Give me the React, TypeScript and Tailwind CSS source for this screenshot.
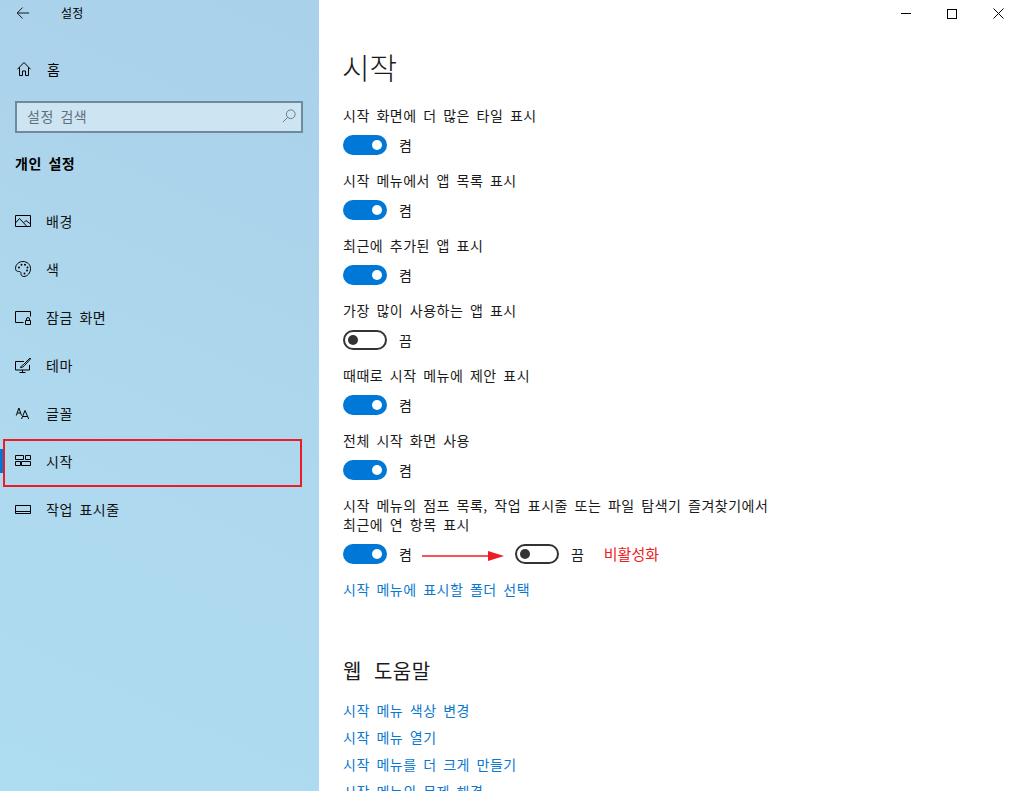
import type { ReactNode } from "react";

const font = { fontFamily: '"Noto Sans CJK KR", "Noto Sans", sans-serif' };

function Toggle({ on }: { on: boolean }) {
  return on ? (
    <div className="flex h-[20px] w-[44px] items-center justify-end rounded-full bg-[#0078d7] pr-[5px]">
      <div className="h-[10px] w-[10px] rounded-full bg-white" />
    </div>
  ) : (
    <div className="flex h-[20px] w-[44px] items-center rounded-full border-2 border-[#333333] bg-white pl-[3px]">
      <div className="h-[10px] w-[10px] rounded-full bg-[#333333]" />
    </div>
  );
}

function Setting({ label, on }: { label: string; on: boolean }) {
  return (
    <div className="h-[65px]">
      <div className="h-[20px] text-[14px] leading-[18px] tracking-[0.5px] text-[#1a1a1a]">{label}</div>
      <div className="mt-[9px] flex items-center gap-[12px]">
        <Toggle on={on} />
        <span className="text-[14px] leading-[20px] text-[#1a1a1a]">{on ? "켬" : "끔"}</span>
      </div>
    </div>
  );
}

const icon = "h-[16px] w-[16px] shrink-0 fill-none stroke-black stroke-1";

const navItems: { label: string; icon: ReactNode }[] = [
  {
    label: "배경",
    icon: (
      <svg viewBox="0 0 16 16" className={icon}>
        <path d="M.5 2.5h15v11H.5z" />
        <path d="M.5 10 4.5 5.5 12 13.5M9 9.5l2-2 4.5 3.5" />
      </svg>
    ),
  },
  {
    label: "색",
    icon: (
      <svg viewBox="0 0 16 16" className={icon}>
        <path d="M8 .5C3.8.5.5 3.6.5 7.5c0 2.2 1.6 3 3 3 1.6 0 2.5.3 2.5 2 0 1.8 1 3 2.8 3 3.6 0 6.7-3.5 6.7-8 0-4-3.400-7-7.500-7z" />
        <g className="fill-black stroke-none">
          <circle cx="4" cy="6.5" r="1" />
          <circle cx="6.5" cy="3.8" r="1" />
          <circle cx="10" cy="3.8" r="1" />
          <circle cx="12.5" cy="6.5" r="1" />
          <circle cx="12" cy="9.5" r="1" />
          <circle cx="9.5" cy="12.5" r="1" />
        </g>
      </svg>
    ),
  },
  {
    label: "잠금 화면",
    icon: (
      <svg viewBox="0 0 16 16" className={icon}>
        <path d="M8.5 13.5h-8v-11h15v5" />
        <path d="M10.5 11.5h5v4h-5zM11.5 11.5V10a1.5 1.5 0 0 1 3 0v1.5" />
      </svg>
    ),
  },
  {
    label: "테마",
    icon: (
      <svg viewBox="0 0 16 16" className={icon}>
        <path d="M9 4.5H.5V13h14V8M4.5 15.5h6M7.5 13v2.500" />
        <path d="M15 1 8.5 7.5l1 1L15.500 2zM8 8c-1 .3-1.800 1-2.500 2.500 1.500 0 2.800-.5 3.500-1.500" />
      </svg>
    ),
  },
  {
    label: "글꼴",
    icon: (
      <svg viewBox="0 0 16 16" className={icon}>
        <path d="m1.3 10.500 2.600-7.500 2.600 7.500M2.200 8h3.400M6.500 14 10 5.500l3.700 8.500M7.800 11.500h4.800" />
      </svg>
    ),
  },
  {
    label: "시작",
    icon: (
      <svg viewBox="0 0 16 16" className={icon}>
        <path d="M.5 2.5h8v4h-8zM10.5 2.5h5v4h-5zM.5 8.5h5v4h-5zM6.5 8.5h9v4h-9z" />
      </svg>
    ),
  },
  {
    label: "작업 표시줄",
    icon: (
      <svg viewBox="0 0 16 16" className={icon}>
        <path d="M.5 4.5h15v8H.5zM.5 10.5h15" />
      </svg>
    ),
  },
];

const settings = [
  { label: "시작 화면에 더 많은 타일 표시", on: true },
  { label: "시작 메뉴에서 앱 목록 표시", on: true },
  { label: "최근에 추가된 앱 표시", on: true },
  { label: "가장 많이 사용하는 앱 표시", on: false },
  { label: "때때로 시작 메뉴에 제안 표시", on: true },
  { label: "전체 시작 화면 사용", on: true },
];

const helpLinks = ["시작 메뉴 색상 변경", "시작 메뉴 열기", "시작 메뉴를 더 크게 만들기", "시작 메뉴의 문제 해결"];

function Sidebar() {
  return (
    <aside className="h-full w-[319px] shrink-0 bg-[linear-gradient(205deg,#a9d1ea_0%,#aed8ee_55%,#aedcf0_100%)] text-black">
      <div className="flex h-[26px] items-center">
        <svg viewBox="0 0 16 16" className="ml-[16px] h-[14px] w-[14px] fill-none stroke-[#111111] stroke-[1.1]">
          <path d="M15 8H1.5M7.5 1.8 1.3 8l6.2 6.2" />
        </svg>
        <span className="ml-[31px] text-[12px] tracking-[0.3px]">설정</span>
      </div>
      <div className="mt-[27px] flex h-[32px] items-center pl-[16px]">
        <svg viewBox="0 0 16 16" className={icon}>
          <path d="M1.5 8.2 8 1.5l6.5 6.7M3.5 6.5v8h3V10h3v4.500h3v-8" />
        </svg>
        <span className="ml-[15px] text-[14px] tracking-[0.5px]">홈</span>
      </div>
      <div className="mx-[15px] mt-[16px] flex h-[32px] w-[288px] items-center justify-between border-2 border-[#6e8a9d] bg-[#cde4f2] pr-[5px] pb-[2px] pl-[10px]">
        <span className="text-[14px] tracking-[0.5px] text-[#5f6f7a]">설정 검색</span>
        <svg viewBox="0 0 16 16" className="h-[14px] w-[14px] fill-none stroke-[#5f6f7a] stroke-1">
          <circle cx="10" cy="6" r="5" />
          <path d="M6.5 9.5 1 15" />
        </svg>
      </div>
      <div className="mt-[20px] pl-[15px] text-[14px] leading-[20px] font-bold tracking-[0.5px]">개인 설정</div>
      <nav className="relative mt-[24px]">
        {navItems.map((item) => (
          <div key={item.label} className="flex h-[48px] items-center pl-[15px]">
            {item.icon}
            <span className="ml-[15px] text-[14px] tracking-[0.5px] text-[#111111]">{item.label}</span>
          </div>
        ))}
        <div className="absolute top-[252px] left-0 h-[24px] w-[4px] bg-[#0078d7]" />
        <div className="absolute top-[242px] left-[3px] h-[48px] w-[299px] border-2 border-[#ed1c24]" />
      </nav>
    </aside>
  );
}

export default function App() {
  return (
    <div className="flex h-[791px] w-[1014px] overflow-hidden bg-white [word-spacing:3px]" style={font}>
      <Sidebar />
      <main className="relative flex-1 pl-[24px] text-[#1a1a1a]">
        <div className="absolute top-0 right-[-7px] flex h-[27px]">
          <div className="flex w-[46px] items-center justify-center">
            <div className="h-px w-[10px] bg-black" />
          </div>
          <div className="flex w-[46px] items-center justify-center">
            <div className="h-[10px] w-[10px] border border-black" />
          </div>
          <div className="flex w-[46px] items-center justify-center">
            <svg viewBox="0 0 11 11" className="h-[11px] w-[11px] fill-none stroke-black stroke-1">
              <path d="m.5.5 10 10M10.5.5l-10 10" />
            </svg>
          </div>
        </div>
        <h1 className="mt-[46px] ml-[-1px] h-[60px] text-[30px] leading-[40px] font-light">시작</h1>
        {settings.map((s) => (
          <Setting key={s.label} label={s.label} on={s.on} />
        ))}
        <div className="text-[14px] leading-[19px] tracking-[0.5px]">
          시작 메뉴의 점프 목록, 작업 표시줄 또는 파일 탐색기 즐겨찾기에서
          <br />
          최근에 연 항목 표시
        </div>
        <div className="mt-[10px] flex h-[20px] items-center">
          <Toggle on />
          <span className="ml-[12px] text-[14px]">켬</span>
          <svg viewBox="0 0 82 12" className="mt-[3px] mr-[11px] ml-[10px] h-[12px] w-[82px]">
            <path d="M0 6h68" stroke="#ed1c24" strokeWidth="1.5" />
            <path d="M66 1l16 5-16 5z" fill="#ed1c24" />
          </svg>
          <Toggle on={false} />
          <span className="ml-[12px] text-[14px]">끔</span>
          <span className="ml-[20px] text-[15px] text-[#ed1c24]">비활성화</span>
        </div>
        <div className="mt-[15px] text-[14px] leading-[20px] tracking-[0.5px] text-[#0b78ce]">시작 메뉴에 표시할 폴더 선택</div>
        <h2 className="mt-[56px] text-[20px] leading-[32px] tracking-[0.5px] [word-spacing:7px]">웹 도움말</h2>
        <div className="mt-[13px] flex flex-col gap-[7px]">
          {helpLinks.map((link) => (
            <div key={link} className="h-[20px] text-[14px] leading-[20px] tracking-[0.5px] text-[#0b78ce]">
              {link}
            </div>
          ))}
        </div>
      </main>
    </div>
  );
}
